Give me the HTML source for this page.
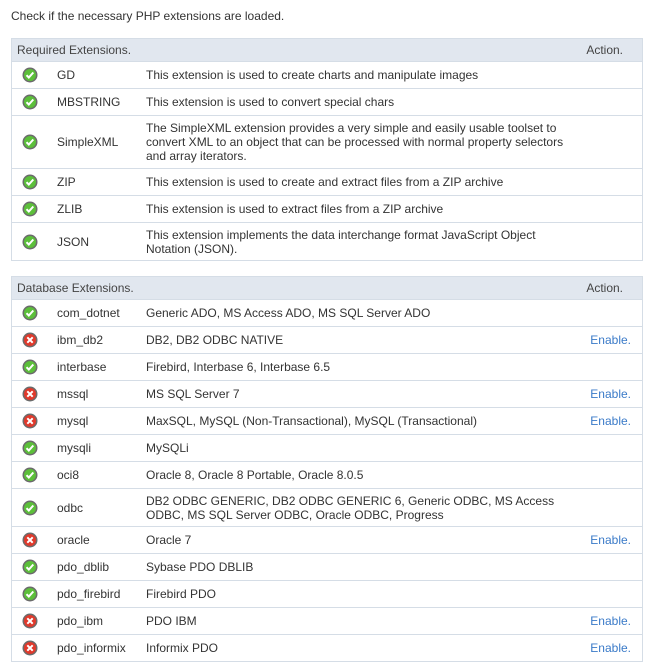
<!DOCTYPE html>
<html><head><style>
body{margin:0;background:#fff;font-family:"Liberation Sans",Arial,sans-serif;font-size:12px;color:#333;}
p{position:absolute;left:11px;top:9px;margin:0;}
table{position:absolute;left:11px;width:632px;border-collapse:collapse;border:1px solid #d5dde6;}
th{background:#e1e7ef;font-weight:normal;text-align:left;height:22px;padding:0 5px;color:#444;}
th.a{text-align:right;padding-right:19px;}
td{border-top:1px solid #d5dde6;height:26px;padding:0;line-height:14px;vertical-align:middle;}
td.i{width:35px;text-align:left;padding-left:10px;}
td.n{width:89px;}
td.a{text-align:right;padding-right:11px;color:#3a7ac8;width:60px;}
.ic{display:inline-block;width:16px;height:16px;vertical-align:middle;}
</style></head><body>
<p>Check if the necessary PHP extensions are loaded.</p>
<svg width="0" height="0" style="position:absolute">
<defs>
<symbol id="ok" viewBox="0 0 16 16"><circle cx="8" cy="8" r="7.5" fill="#6b6b6b"/><circle cx="8" cy="8" r="6" fill="#5cbf3a"/><path d="M4.5 8.2l2.3 2.3 4.5-5" stroke="#fff" stroke-width="2" fill="none"/></symbol>
<symbol id="no" viewBox="0 0 16 16"><circle cx="8" cy="8" r="7.5" fill="#6b6b6b"/><circle cx="8" cy="8" r="6" fill="#e0392b"/><path d="M5.3 5.3l5.4 5.4M10.7 5.3l-5.4 5.4" stroke="#fff" stroke-width="2"/></symbol>
</defs></svg>
<table style="top:38px">
<tr><th colspan="3">Required Extensions.</th><th class="a">Action.</th></tr>
<tr><td class="i"><svg class="ic"><use href="#ok"/></svg></td><td class="n">GD</td><td>This extension is used to create charts and manipulate images</td><td class="a"></td></tr>
<tr><td class="i"><svg class="ic"><use href="#ok"/></svg></td><td class="n">MBSTRING</td><td>This extension is used to convert special chars</td><td class="a"></td></tr>
<tr><td class="i" style="height:52px"><svg class="ic"><use href="#ok"/></svg></td><td class="n">SimpleXML</td><td>The SimpleXML extension provides a very simple and easily usable toolset to convert XML to an object that can be processed with normal property selectors and array iterators.</td><td class="a"></td></tr>
<tr><td class="i"><svg class="ic"><use href="#ok"/></svg></td><td class="n">ZIP</td><td>This extension is used to create and extract files from a ZIP archive</td><td class="a"></td></tr>
<tr><td class="i"><svg class="ic"><use href="#ok"/></svg></td><td class="n">ZLIB</td><td>This extension is used to extract files from a ZIP archive</td><td class="a"></td></tr>
<tr><td class="i" style="height:37px"><svg class="ic"><use href="#ok"/></svg></td><td class="n">JSON</td><td>This extension implements the data interchange format JavaScript Object Notation (JSON).</td><td class="a"></td></tr>
</table>
<table style="top:276px">
<tr><th colspan="3">Database Extensions.</th><th class="a">Action.</th></tr>
<tr><td class="i"><svg class="ic"><use href="#ok"/></svg></td><td class="n">com_dotnet</td><td>Generic ADO, MS Access ADO, MS SQL Server ADO</td><td class="a"></td></tr>
<tr><td class="i"><svg class="ic"><use href="#no"/></svg></td><td class="n">ibm_db2</td><td>DB2, DB2 ODBC NATIVE</td><td class="a">Enable.</td></tr>
<tr><td class="i"><svg class="ic"><use href="#ok"/></svg></td><td class="n">interbase</td><td>Firebird, Interbase 6, Interbase 6.5</td><td class="a"></td></tr>
<tr><td class="i"><svg class="ic"><use href="#no"/></svg></td><td class="n">mssql</td><td>MS SQL Server 7</td><td class="a">Enable.</td></tr>
<tr><td class="i"><svg class="ic"><use href="#no"/></svg></td><td class="n">mysql</td><td>MaxSQL, MySQL (Non-Transactional), MySQL (Transactional)</td><td class="a">Enable.</td></tr>
<tr><td class="i"><svg class="ic"><use href="#ok"/></svg></td><td class="n">mysqli</td><td>MySQLi</td><td class="a"></td></tr>
<tr><td class="i"><svg class="ic"><use href="#ok"/></svg></td><td class="n">oci8</td><td>Oracle 8, Oracle 8 Portable, Oracle 8.0.5</td><td class="a"></td></tr>
<tr><td class="i" style="height:37px"><svg class="ic"><use href="#ok"/></svg></td><td class="n">odbc</td><td>DB2 ODBC GENERIC, DB2 ODBC GENERIC 6, Generic ODBC, MS Access ODBC, MS SQL Server ODBC, Oracle ODBC, Progress</td><td class="a"></td></tr>
<tr><td class="i"><svg class="ic"><use href="#no"/></svg></td><td class="n">oracle</td><td>Oracle 7</td><td class="a">Enable.</td></tr>
<tr><td class="i"><svg class="ic"><use href="#ok"/></svg></td><td class="n">pdo_dblib</td><td>Sybase PDO DBLIB</td><td class="a"></td></tr>
<tr><td class="i"><svg class="ic"><use href="#ok"/></svg></td><td class="n">pdo_firebird</td><td>Firebird PDO</td><td class="a"></td></tr>
<tr><td class="i"><svg class="ic"><use href="#no"/></svg></td><td class="n">pdo_ibm</td><td>PDO IBM</td><td class="a">Enable.</td></tr>
<tr><td class="i"><svg class="ic"><use href="#no"/></svg></td><td class="n">pdo_informix</td><td>Informix PDO</td><td class="a">Enable.</td></tr>
</table>
</body></html>
